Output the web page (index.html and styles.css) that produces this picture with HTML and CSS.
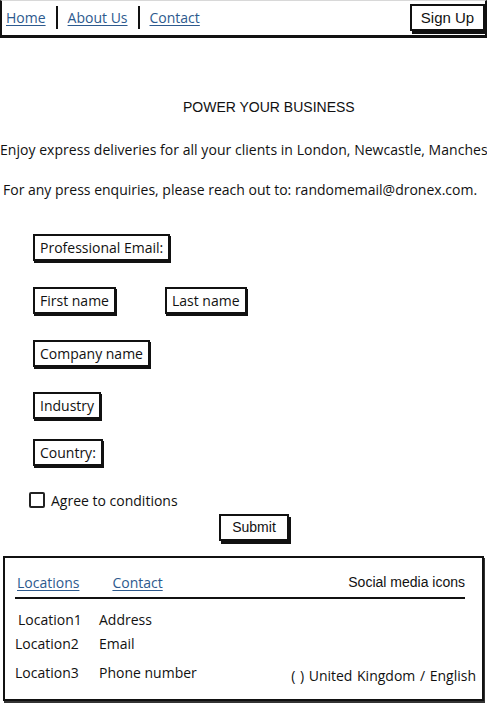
FILE: index.html
```html
<!DOCTYPE html>
<html lang="en">
<head>
<meta charset="utf-8">
<title>Dronex</title>
<link rel="stylesheet" href="styles.css">
</head>
<body>
<header class="topbar">
  <nav class="nav">
    <a href="#" class="nav-link">Home</a>
    <span class="sep"></span>
    <a href="#" class="nav-link">About Us</a>
    <span class="sep"></span>
    <a href="#" class="nav-link">Contact</a>
  </nav>
  <button class="signup">Sign Up</button>
</header>

<main class="main">
  <h1 class="title">POWER YOUR BUSINESS</h1>
  <p class="lead">Enjoy express deliveries for all your clients in London, Newcastle, Manches</p>
  <p class="press">For any press enquiries, please reach out to: randomemail@dronex.com.</p>

  <form class="form">
    <div class="row r-email"><span class="field">Professional Email:</span></div>
    <div class="row r-names"><span class="field">First name</span><span class="field">Last name</span></div>
    <div class="row r-company"><span class="field">Company name</span></div>
    <div class="row r-industry"><span class="field">Industry</span></div>
    <div class="row r-country"><span class="field">Country:</span></div>
    <label class="agree"><span class="box"></span>Agree to conditions</label>
    <div class="submit-row"><span class="submit">Submit</span></div>
  </form>
</main>

<footer class="footer">
  <div class="foot-head">
    <a href="#" class="foot-link">Locations</a>
    <a href="#" class="foot-link contact">Contact</a>
    <span class="social">Social media icons</span>
  </div>
  <div class="foot-body">
    <div class="col-loc">
      <span class="l1">Location1</span>
      <span class="l2">Location2</span>
      <span class="l3">Location3</span>
    </div>
    <div class="col-info">
      <span class="l1">Address</span>
      <span class="l2">Email</span>
      <span class="l3">Phone number</span>
    </div>
    <div class="col-lang">(&nbsp;) United Kingdom / English</div>
  </div>
</footer>
</body>
</html>
```

FILE: styles.css
```css
* { box-sizing: border-box; }
html, body { margin: 0; padding: 0; }
body {
  width: 487px;
  height: 705px;
  overflow: hidden;
  background: #fff;
  color: #111;
  font-family: "Open Sans", "Liberation Sans", sans-serif;
  font-size: 14px;
}
.topbar {
  height: 38px;
  display: flex;
  align-items: flex-start;
  justify-content: space-between;
  border-left: 2px solid #111;
  border-right: 2px solid #111;
  border-bottom: 3px solid #111;
  border-top: 1px solid #d8d8d8;
  padding: 2px 0 0 4px;
}
.nav {
  display: flex;
  align-items: center;
  gap: 10px;
  height: 28px;
}
.nav-link {
  color: #2d5a8e;
  font-size: 14px;
  text-decoration: underline;
  text-underline-offset: 2px;
}
.sep {
  width: 2px;
  height: 23px;
  background: #111;
}
.signup {
  margin-top: 1px;
  width: 75px;
  height: 27px;
  border: 2px solid #111;
  background: #fff;
  box-shadow: 2px 3px 0 #111;
  font-family: "Liberation Sans", Arial, sans-serif;
  font-size: 15px;
  color: #111;
  padding: 0;
}
.main { padding: 0; }
.title {
  margin: 61px 0 0 0;
  padding-left: 183px;
  font-family: "Liberation Sans", Arial, sans-serif;
  font-weight: normal;
  font-size: 14px;
  line-height: 16px;
}
.lead {
  margin: 27px 0 0 0;
  white-space: nowrap;
  line-height: 16px;
  letter-spacing: 0.04px;
}
.press {
  margin: 24px 0 0 3px;
  white-space: nowrap;
  line-height: 16px;
}
.form { padding-left: 33px; }
.row { display: flex; gap: 49px; }
.field {
  display: inline-block;
  height: 27px;
  line-height: 23px;
  border: 2px solid #111;
  box-shadow: 1px 2px 0 #111;
  padding: 0 5px;
  background: #fff;
}
.r-email { margin-top: 36px; }
.r-names { margin-top: 26px; }
.r-company { margin-top: 26px; }
.r-industry { margin-top: 25px; }
.r-country { margin-top: 20px; }
.agree {
  display: flex;
  align-items: center;
  gap: 6px;
  margin: 25px 0 0 -4px;
  height: 18px;
}
.box {
  width: 16px;
  height: 16px;
  border: 2px solid #222;
  border-radius: 2px;
}
.submit-row { padding-left: 186px; margin-top: 5px; }
.submit {
  display: inline-block;
  width: 70px;
  height: 27px;
  line-height: 23px;
  text-align: center;
  border: 2px solid #111;
  box-shadow: 2px 3px 0 #111;
  font-family: "Liberation Sans", Arial, sans-serif;
  font-size: 14px;
}
.footer {
  margin: 15px 0 0 3px;
  width: 481px;
  height: 145px;
  border: 2px solid #111;
  box-shadow: 1px 2px 0 #333;
  padding: 0 17px 0 10px;
}
.foot-head {
  display: flex;
  align-items: center;
  height: 41px;
  padding: 9px 0 0 2px;
  border-bottom: 2px solid #111;
}
.foot-link {
  color: #2d5a8e;
  text-decoration: underline;
  text-underline-offset: 2px;
}
.foot-link.contact { margin-left: 33px; }
.social {
  margin-left: auto;
  font-family: "Liberation Sans", Arial, sans-serif;
}
.foot-body {
  display: flex;
  padding-top: 12px;
}
.col-loc, .col-info {
  display: flex;
  flex-direction: column;
}
.col-loc { width: 84px; }
.l1 { line-height: 18px; }
.l2 { line-height: 18px; margin-top: 6px; }
.l3 { line-height: 18px; margin-top: 11px; }
.col-loc .l1 { padding-left: 3px; }
.col-lang {
  margin-left: auto;
  align-self: flex-end;
  line-height: 18px;
  margin-bottom: -3px;
  margin-right: -11px;
  word-spacing: 1px;
}
```
